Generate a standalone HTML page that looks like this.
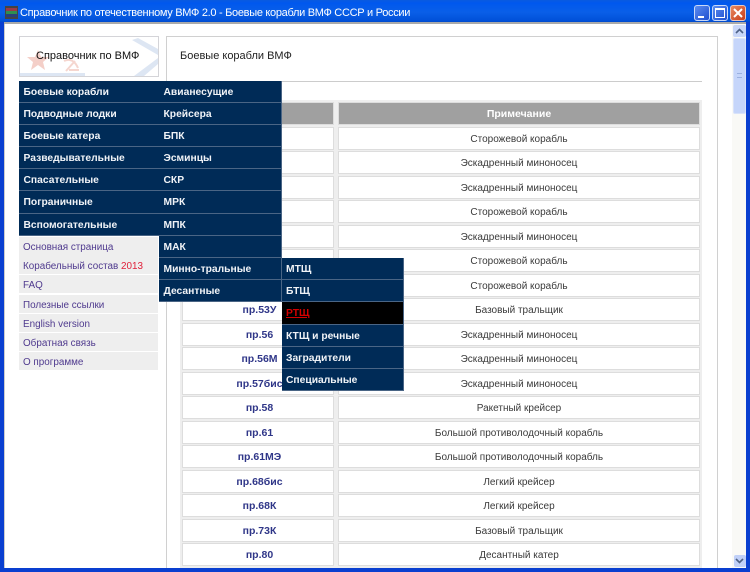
<!DOCTYPE html>
<html><head><meta charset="utf-8">
<style>
html,body{margin:0;padding:0;width:750px;height:572px;overflow:hidden;background:#fff}
*{box-sizing:border-box}
body{font-family:"Liberation Sans",sans-serif;position:relative;filter:blur(.35px)}
div{position:absolute}
.c{border:1px solid #ddd;background:#fff;text-align:center;height:23px;line-height:23px;font-size:10px;color:#3a3a3a}
.a{left:182px;width:152px;color:#2f3688;font-weight:bold;font-size:10.5px;padding-left:3px}
.b{left:338px;width:362px}
.m{background:#002b57;color:#f0f3f7;font-weight:bold;font-size:10.3px;height:22px;line-height:23px;padding-left:4.5px;border-bottom:1px solid #4a6585;border-right:1px solid #4a6585;white-space:nowrap}
.t{height:23px}
.l{left:19px;width:139px;height:18px;background:#eee;color:#4f3a8e;font-size:9.9px;line-height:22px;padding-left:4px;white-space:nowrap}
</style></head><body>
<!-- main panel -->
<div style="left:166px;top:36px;width:552px;height:540px;border:1px solid #d0d0d0;background:#fff"></div>
<div style="left:180px;top:49px;font-size:11px;line-height:14px;color:#222;white-space:nowrap">Боевые корабли ВМФ</div>
<div style="left:180px;top:81px;width:522px;height:1px;background:#ccc"></div>
<div style="left:180px;top:100px;width:522px;height:472px;background:#eee"></div>
<div style="left:182px;top:102px;width:152px;height:23px;background:#a0a0a0;border:1px solid #ddd"></div>
<div style="left:338px;top:102px;width:362px;height:23px;background:#a0a0a0;border:1px solid #ddd;color:#fff;font-weight:bold;font-size:10.5px;text-align:center;line-height:22px">Примечание</div>
<!-- rows -->
<div class="c a" style="top:126.5px"></div><div class="c b" style="top:126.5px">Сторожевой корабль</div>
<div class="c a" style="top:151px"></div><div class="c b" style="top:151px">Эскадренный миноносец</div>
<div class="c a" style="top:175.5px"></div><div class="c b" style="top:175.5px">Эскадренный миноносец</div>
<div class="c a" style="top:200px"></div><div class="c b" style="top:200px">Сторожевой корабль</div>
<div class="c a" style="top:224.5px"></div><div class="c b" style="top:224.5px">Эскадренный миноносец</div>
<div class="c a" style="top:249px"></div><div class="c b" style="top:249px">Сторожевой корабль</div>
<div class="c a" style="top:273.5px"></div><div class="c b" style="top:273.5px">Сторожевой корабль</div>
<div class="c a" style="top:298px">пр.53У</div><div class="c b" style="top:298px">Базовый тральщик</div>
<div class="c a" style="top:322.5px">пр.56</div><div class="c b" style="top:322.5px">Эскадренный миноносец</div>
<div class="c a" style="top:347px">пр.56М</div><div class="c b" style="top:347px">Эскадренный миноносец</div>
<div class="c a" style="top:371.5px">пр.57бис</div><div class="c b" style="top:371.5px">Эскадренный миноносец</div>
<div class="c a" style="top:396px">пр.58</div><div class="c b" style="top:396px">Ракетный крейсер</div>
<div class="c a" style="top:420.5px">пр.61</div><div class="c b" style="top:420.5px">Большой противолодочный корабль</div>
<div class="c a" style="top:445px">пр.61МЭ</div><div class="c b" style="top:445px">Большой противолодочный корабль</div>
<div class="c a" style="top:469.5px">пр.68бис</div><div class="c b" style="top:469.5px">Легкий крейсер</div>
<div class="c a" style="top:494px">пр.68К</div><div class="c b" style="top:494px">Легкий крейсер</div>
<div class="c a" style="top:518.5px">пр.73К</div><div class="c b" style="top:518.5px">Базовый тральщик</div>
<div class="c a" style="top:543px">пр.80</div><div class="c b" style="top:543px">Десантный катер</div>
<!-- window frame -->
<div style="left:0;top:0;width:750px;height:24px;background:linear-gradient(#0a5ae0 0,#0058ee 3px,#0a5fe8 12px,#0050d8 21px,#0048c8 22px)"></div>
<div style="left:0;top:22px;width:750px;height:2px;background:#aaa"></div>
<div style="left:0;top:22px;width:4px;height:550px;background:#0a3fd0"></div>
<div style="left:746px;top:22px;width:4px;height:550px;background:#0a3fd0"></div>
<div style="left:0;top:568px;width:750px;height:4px;background:#0a3fd0"></div>
<div style="left:4px;top:24px;width:1px;height:544px;background:#ccc"></div>
<svg style="position:absolute;left:5px;top:6px" width="13" height="13" viewBox="0 0 13 13"><rect width="13" height="13" fill="#444"/><rect x="1" y="2" width="11" height="3" fill="#9a3a4a"/><rect x="1" y="5" width="11" height="3" fill="#2f8f4f"/><rect x="1" y="8" width="11" height="3" fill="#28407a"/></svg>
<div style="left:20px;top:4px;color:#fff;font-size:11px;line-height:18px;letter-spacing:-.3px;white-space:nowrap">Справочник по отечественному ВМФ 2.0 - Боевые корабли ВМФ СССР и России</div>
<!-- window buttons -->
<div style="left:694px;top:5px;width:16px;height:16px;border:1px solid #c8d8f8;border-radius:3px;background:linear-gradient(135deg,#5b8cf0,#1f4fd0)"><div style="left:3px;top:10px;width:6px;height:2px;background:#fff"></div></div>
<div style="left:712px;top:5px;width:16px;height:16px;border:1px solid #c8d8f8;border-radius:3px;background:linear-gradient(135deg,#5b8cf0,#1f4fd0)"><div style="left:2px;top:2px;width:10px;height:10px;border:1px solid #fff;border-top:2px solid #fff"></div></div>
<div style="left:730px;top:5px;width:16px;height:16px;border:1px solid #e8c8c0;border-radius:3px;background:linear-gradient(135deg,#e88a60,#c83c18)"><svg style="position:absolute;left:2px;top:2px" width="10" height="10"><path d="M1 1L9 9M9 1L1 9" stroke="#fff" stroke-width="2"/></svg></div>
<!-- scrollbar -->
<div style="left:732px;top:24px;width:14px;height:544px;background:#f9f9f6"></div>
<div style="left:733px;top:25px;width:13px;height:12px;background:#c8d6f8;border-radius:2px"></div>
<svg style="position:absolute;left:735px;top:28px" width="9" height="6"><path d="M1 5L4.5 1.5L8 5" stroke="#4d6185" stroke-width="1.6" fill="none"/></svg>
<div style="left:733px;top:38px;width:13px;height:76px;background:#c5d5fa;border:1px solid #d8e2fa;border-radius:2px"></div>
<div style="left:737px;top:73px;width:5px;height:5px;border-top:1px solid #9ab0e0;border-bottom:1px solid #9ab0e0"></div>
<div style="left:734px;top:555px;width:12px;height:12px;background:#c0d0f8;border-radius:2px"></div>
<svg style="position:absolute;left:735px;top:558px" width="9" height="6"><path d="M1 1L4.5 4.5L8 1" stroke="#4d6185" stroke-width="1.6" fill="none"/></svg>
<!-- logo -->
<div style="left:19px;top:36px;width:140px;height:41px;border:1px solid #d4d4d8;overflow:hidden;background:#fff">
<svg style="position:absolute;left:0;top:0" width="138" height="39"><path d="M118 1L138 12V18L112 3zM114 39L138 21V27L124 39zM0 36H65V39H0z" fill="#dde6f3"/><path d="M18 13L21 20H29L23 25L25 33L18 28L11 33L13 25L7 20H15z" fill="#f4cfc8"/><path d="M44 24c6-3 11 0 14 7M55 24L46 34M49 33l10 0" stroke="#f5d6cf" stroke-width="2" fill="none"/></svg>
<div style="left:16px;top:12px;font-size:11px;line-height:14px;color:#111;white-space:nowrap">Справочник по ВМФ</div></div>
<!-- side links -->
<div class="l" style="top:236.5px;height:19px">Основная страница</div>
<div class="l" style="top:256px">Корабельный состав <span style="color:#e0203a">2013</span></div>
<div class="l" style="top:275px">FAQ</div>
<div class="l" style="top:294.5px">Полезные ссылки</div>
<div class="l" style="top:313.5px">English version</div>
<div class="l" style="top:332.5px">Обратная связь</div>
<div class="l" style="top:352px">О программе</div>
<!-- menu 1 -->
<div class="m" style="left:19px;width:140.5px;top:81px">Боевые корабли</div>
<div class="m" style="left:19px;width:140.5px;top:103px">Подводные лодки</div>
<div class="m" style="left:19px;width:140.5px;top:125px">Боевые катера</div>
<div class="m" style="left:19px;width:140.5px;top:147px">Разведывательные</div>
<div class="m" style="left:19px;width:140.5px;top:169px">Спасательные</div>
<div class="m t" style="left:19px;width:140.5px;top:191px">Пограничные</div>
<div class="m" style="left:19px;width:140.5px;top:214px">Вспомогательные</div>
<!-- menu 2 -->
<div class="m" style="left:159px;width:122.5px;top:81px">Авианесущие</div>
<div class="m" style="left:159px;width:122.5px;top:103px">Крейсера</div>
<div class="m" style="left:159px;width:122.5px;top:125px">БПК</div>
<div class="m" style="left:159px;width:122.5px;top:147px">Эсминцы</div>
<div class="m" style="left:159px;width:122.5px;top:169px">СКР</div>
<div class="m t" style="left:159px;width:122.5px;top:191px">МРК</div>
<div class="m" style="left:159px;width:122.5px;top:214px">МПК</div>
<div class="m" style="left:159px;width:122.5px;top:236px">МАК</div>
<div class="m" style="left:159px;width:122.5px;top:258px">Минно-тральные</div>
<div class="m" style="left:159px;width:122.5px;top:280px">Десантные</div>
<!-- menu 3 -->
<div class="m" style="left:281.5px;width:122.5px;top:258px">МТЩ</div>
<div class="m" style="left:281.5px;width:122.5px;top:280px">БТЩ</div>
<div class="m t" style="left:281.5px;width:122.5px;top:302px;background:#000;color:#d40000;text-decoration:underline">РТЩ</div>
<div class="m" style="left:281.5px;width:122.5px;top:325px">КТЩ и речные</div>
<div class="m" style="left:281.5px;width:122.5px;top:347px">Заградители</div>
<div class="m" style="left:281.5px;width:122.5px;top:369px">Специальные</div>
</body></html>
